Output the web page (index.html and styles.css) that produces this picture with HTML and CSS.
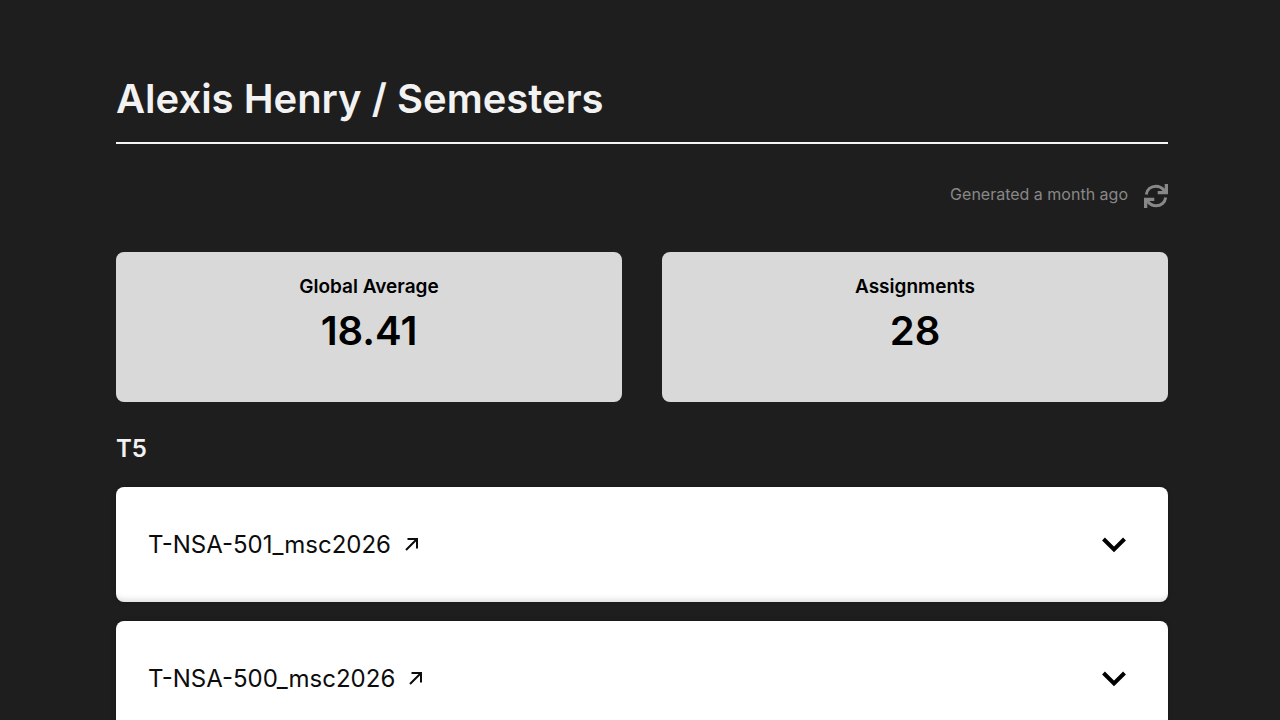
FILE: index.html
```html
<!DOCTYPE html>
<html lang="en">
<head>
<meta charset="utf-8">
<meta name="viewport" content="width=device-width, initial-scale=1">
<title>Alexis Henry / Semesters</title>
<link rel="stylesheet" href="styles.css">
</head>
<body>
<main class="page">
  <header class="page-header"><h1 class="page-title">Alexis Henry / Semesters</h1></header>
  <div class="toolbar">
    <span class="generated">Generated a month ago</span>
    <button class="refresh" type="button" aria-label="Refresh">
      <svg viewBox="0 0 24 24" width="24" height="24" aria-hidden="true">
        <path class="refresh-arc" d="M2.300 10.500C3 5.500 7 2.300 12 2.300c3.300 0 6 1.500 8 4M21.700 13.500C21 18.500 17 21.700 12 21.700c-3.300 0-6-1.500-8-4"/>
        <path class="refresh-head" d="M24 0v10.300H13.700V7h4.800L20.700 4.800V0zM0 24V13.700h10.300V17H5.500l-2.200 2.200V24z"/>
      </svg>
    </button>
  </div>
  <section class="stats">
    <article class="stat"><h2 class="stat-label">Global Average</h2><p class="stat-value">18.41</p></article>
    <article class="stat"><h2 class="stat-label">Assignments</h2><p class="stat-value">28</p></article>
  </section>
  <section>
    <h2 class="semester">T5</h2>
    <div class="modules">
      <article class="module">
        <a class="module-link" href="#nsa-501">T-NSA-501_msc2026 <svg class="arrow" viewBox="0 0 14 14" aria-hidden="true"><path d="M1 12 12 1M2.500 1H12v9.500"/></svg></a>
        <button class="toggle" type="button" aria-label="Expand T-NSA-501_msc2026"><svg viewBox="0 0 24 16"><path d="M1.500 2 12 12.500 22.500 2"/></svg></button>
      </article>
      <article class="module">
        <a class="module-link" href="#nsa-500">T-NSA-500_msc2026 <svg class="arrow" viewBox="0 0 14 14" aria-hidden="true"><path d="M1 12 12 1M2.500 1H12v9.500"/></svg></a>
        <button class="toggle" type="button" aria-label="Expand T-NSA-500_msc2026"><svg viewBox="0 0 24 16"><path d="M1.500 2 12 12.500 22.500 2"/></svg></button>
      </article>
    </div>
  </section>
</main>
</body>
</html>
```
FILE: styles.css
```css
* { box-sizing: border-box; }
body { margin: 0; background: #1e1e1e; color: #f2f2f2; font-family: Inter, sans-serif; }
.page { padding: 74px 112px 40px 116px; }
.page-header { border-bottom: 2px solid #f5f5f5; padding-bottom: 18px; }
.page-title { margin: 0; font-size: 40px; line-height: 50px; font-weight: 600; }
.toolbar { display: flex; justify-content: flex-end; align-items: center; gap: 16px; padding: 40px 0 44px; color: #888; }
.generated { font-size: 16px; line-height: 20px; padding-bottom: 4px; }
.refresh, .toggle { display: flex; border: 0; padding: 0; background: none; color: inherit; cursor: pointer; }
.refresh-arc { fill: none; stroke: currentColor; stroke-width: 3; }
.refresh-head { fill: currentColor; }
.stats { display: grid; grid-template-columns: 1fr 1fr; gap: 40px; }
.stat { min-height: 150px; padding: 24px; border-radius: 8px; background: #d9d9d9; color: #000; text-align: center; }
.stat-label { margin: 0; font-size: 19px; line-height: 22px; font-weight: 600; }
.stat-value { margin: 8px 0 0; font-size: 40px; line-height: 50px; font-weight: 600; }
.semester { margin: 32px 0 23px; font-size: 24px; line-height: 30px; font-weight: 600; }
.modules { display: grid; gap: 19px; }
.module { display: flex; justify-content: space-between; align-items: center; min-height: 115px; padding: 32px 42px 32px 32px; border-radius: 8px; background: #fff; color: #000; box-shadow: inset 0 -7px 6px -5px rgba(0, 0, 0, 0.15), 0 0 4px rgba(0, 0, 0, 0.25); }
.module-link { display: flex; align-items: center; gap: 14px; color: #0c0c0c; font-size: 24px; line-height: 30px; text-decoration: none; }
.arrow { width: 14px; height: 14px; fill: none; stroke: currentColor; stroke-width: 2; }
.toggle svg { width: 24px; height: 16px; fill: none; stroke: currentColor; stroke-width: 4; }
```
